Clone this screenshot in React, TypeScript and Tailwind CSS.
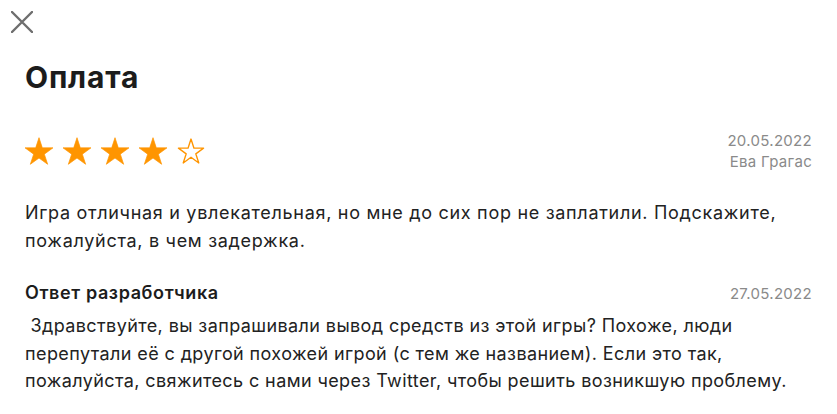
import React from 'react';

const STAR = '12,0.6 14.83,9.31 23.98,9.31 16.57,14.69 19.41,23.39 12,18.01 4.59,23.39 7.43,14.69 0.02,9.31 9.17,9.31';

const Star: React.FC<{ filled: boolean }> = ({ filled }) => (
  <svg width="28" height="28" viewBox="0 0 24 24" className="overflow-visible">
    {filled ? (
      <polygon points={STAR} fill="#ff9500" stroke="#ff9500" strokeWidth="0.6" strokeLinejoin="round" />
    ) : (
      <polygon points={STAR} fill="none" stroke="#ff9500" strokeWidth="1.3" strokeLinejoin="round" transform="translate(1.2 1.2) scale(0.9)" />
    )}
  </svg>
);

export default function App() {
  const rating = 4;

  return (
    <div
      className="w-[837px] h-[414px] bg-white text-[#1f1f1f] overflow-hidden"
      style={{ fontFamily: 'Inter, "Noto Sans", sans-serif' }}
    >
      <div className="pt-[11px] pl-[11px]">
        <button className="block">
          <svg width="22" height="22" viewBox="0 0 22 22">
            <path d="M1 1L21 21M21 1L1 21" stroke="#6e6e6e" strokeWidth="2.4" strokeLinecap="round" />
          </svg>
        </button>
      </div>

      <div className="px-[25px]">
        <h1 className="mt-[26px] text-[30px] leading-[36px] font-bold tracking-[0.8px] text-[#1c1c1c]">Оплата</h1>

        <div className="mt-[35px] flex items-center justify-between">
          <div className="flex items-center gap-[10px]">
            {[1, 2, 3, 4, 5].map((i) => (
              <Star key={i} filled={i <= rating} />
            ))}
          </div>
          <div className="flex flex-col items-end text-[15px] leading-[21px] tracking-[0.3px] text-[#8a8a8a]">
            <span>20.05.2022</span>
            <span>Ева Грагас</span>
          </div>
        </div>

        <p className="mt-[27px] text-[18px] leading-[28px] tracking-[0.7px] text-[#222]">
          Игра отличная и увлекательная, но мне до сих пор не заплатили. Подскажите, пожалуйста, в чем задержка.
        </p>

        <div className="mt-[24px] flex items-center justify-between">
          <span className="text-[18px] leading-[28px] font-semibold tracking-[0.6px] text-[#1c1c1c]">Ответ разработчика</span>
          <span className="text-[15px] leading-[21px] tracking-[0.3px] text-[#8a8a8a]">27.05.2022</span>
        </div>

        <p className="mt-[5px] text-[18px] leading-[27.5px] tracking-[0.4px] text-[#222] whitespace-pre-wrap">
          {' Здравствуйте, вы запрашивали вывод средств из этой игры? Похоже, люди перепутали её с другой похожей игрой (с тем же названием). Если это так, пожалуйста, свяжитесь с нами через Twitter, чтобы решить возникшую проблему.'}
        </p>
      </div>
    </div>
  );
}
